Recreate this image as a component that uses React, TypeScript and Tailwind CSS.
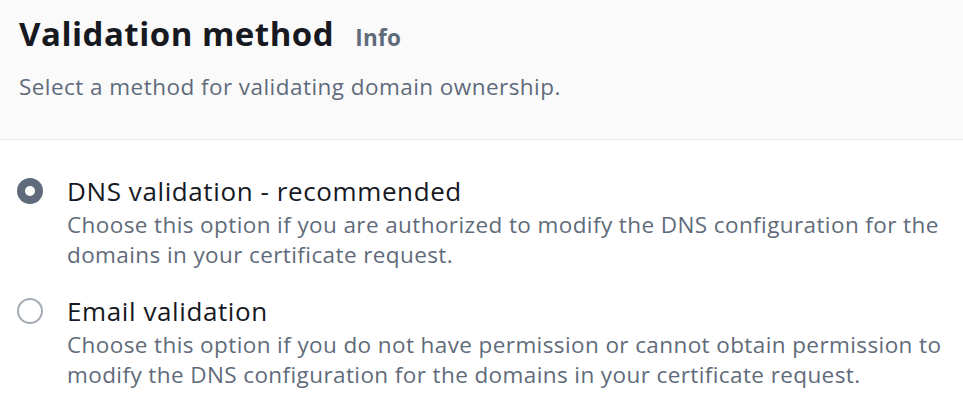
import React, { useState } from 'react';

type Option = {
  value: string;
  label: string;
  description: string;
};

const OPTIONS: Option[] = [
  {
    value: 'dns',
    label: 'DNS validation - recommended',
    description:
      'Choose this option if you are authorized to modify the DNS configuration for the domains in your certificate request.',
  },
  {
    value: 'email',
    label: 'Email validation',
    description:
      'Choose this option if you do not have permission or cannot obtain permission to modify the DNS configuration for the domains in your certificate request.',
  },
];

const RadioDot: React.FC<{ checked: boolean }> = ({ checked }) =>
  checked ? (
    <span className="flex h-[26px] w-[26px] items-center justify-center rounded-full bg-[#5f6b7a]">
      <span className="h-[10px] w-[10px] rounded-full bg-white" />
    </span>
  ) : (
    <span className="block h-[26px] w-[26px] rounded-full border-2 border-[#a4abb3] bg-white" />
  );

export default function App() {
  const [method, setMethod] = useState('dns');

  return (
    <div className="min-h-[418px] w-[963px] bg-white font-['Open_Sans',sans-serif] text-[#16191f]">
      <div className="border-b border-[#e9ebed] bg-[#fafafa] px-[19px] pb-[37px] pt-[14px]">
        <div className="flex items-baseline gap-[21px]">
          <h2 className="text-[33px] font-bold leading-[40px] tracking-[0.5px]">Validation method</h2>
          <span className="text-[22.5px] font-bold leading-[30px] tracking-[0.3px] text-[#5f6b7a]">Info</span>
        </div>
        <p className="mt-[18px] text-[22.5px] leading-[30px] tracking-[0.45px] text-[#5f6b7a]">
          Select a method for validating domain ownership.
        </p>
      </div>

      <div className="flex flex-col gap-[24px] px-[17px] pt-[34px]">
        {OPTIONS.map(opt => (
          <label key={opt.value} className="flex cursor-pointer gap-[24px]" onClick={() => setMethod(opt.value)}>
            <span className="flex h-[34px] shrink-0 items-center">
              <RadioDot checked={method === opt.value} />
            </span>
            <span className="flex flex-col">
              <span className="text-[26px] leading-[34px] tracking-[0.6px]">{opt.label}</span>
              <span className="mt-[2px] text-[22.5px] leading-[30px] tracking-[0.4px] text-[#5f6b7a]">
                {opt.description}
              </span>
            </span>
          </label>
        ))}
      </div>
    </div>
  );
}
